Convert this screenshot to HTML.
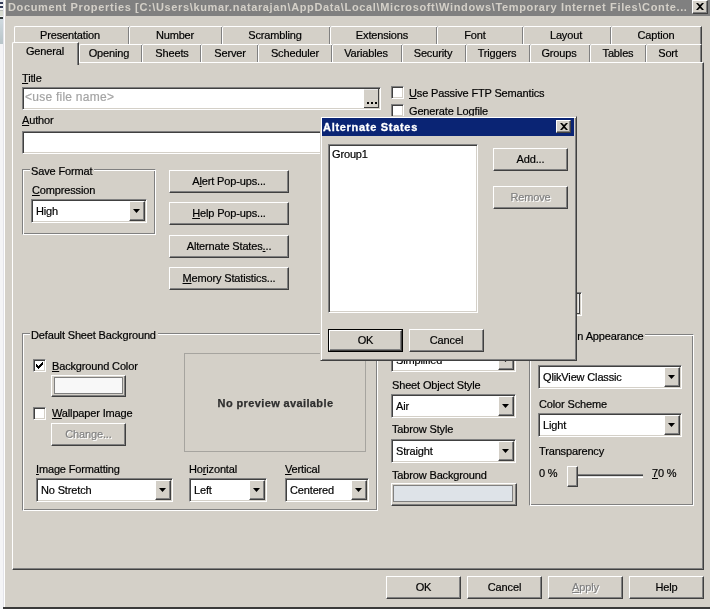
<!DOCTYPE html><html><head><meta charset="utf-8"><style>
html,body{margin:0;padding:0}
body{width:710px;height:609px;overflow:hidden;position:relative;background:#d4d0c8;font-family:"Liberation Sans",sans-serif;font-size:11px;color:#000}
div,svg{position:absolute;box-sizing:content-box}
.t{white-space:nowrap;line-height:14px;height:14px;letter-spacing:-0.15px;will-change:transform;-webkit-text-stroke:0.2px currentColor}
.t u{text-decoration:underline;text-underline-offset:1px}
.rz{background:#d4d0c8;border:1px solid;border-color:#fff #404040 #404040 #fff;box-shadow:inset -1px -1px #808080}
.sk{border:1px solid;border-color:#808080 #fff #fff #808080;box-shadow:inset 1px 1px #404040, inset -1px -1px #d4d0c8}
.gb{border:1px solid;border-color:#808080 #fff #fff #808080;box-shadow:inset 1px 1px #fff, inset -1px -1px #808080}
</style></head><body>
<div style="left:0px;top:0px;width:3px;height:609px;background:#f4f4f6"></div>
<div style="left:0px;top:0px;width:3px;height:2px;background:#e6e8ee"></div>
<div style="left:0px;top:2px;width:3px;height:2px;background:#343c58"></div>
<div style="left:0px;top:6px;width:3px;height:2px;background:#343c58"></div>
<div style="left:0px;top:10px;width:3px;height:1px;background:#b8bcb8"></div>
<div style="left:0px;top:11px;width:3px;height:5px;background:#d8dcd0"></div>
<div style="left:0px;top:17px;width:3px;height:2px;background:#303838"></div>
<div style="left:0px;top:19px;width:3px;height:25px;background:linear-gradient(#d0dae0,#b8c4c8)"></div>
<div style="left:3px;top:0px;width:1px;height:609px;background:#e4e4ea"></div>
<div style="left:4px;top:0px;width:1px;height:609px;background:#fff"></div>
<div style="left:5px;top:0px;width:1px;height:609px;background:#d4d0c8"></div>
<div style="left:6px;top:0px;width:704px;height:16px;background:#808080"></div>
<div class="t" style="left:8px;top:0px;font-size:11px;font-weight:bold;color:#d4d0c8;letter-spacing:0.64px;-webkit-text-stroke:0">Document Properties [C:\Users\kumar.natarajan\AppData\Local\Microsoft\Windows\Temporary Internet Files\Conte...</div>
<div class="rz" style="left:692px;top:0px;width:14px;height:12px;"></div>
<svg style="position:absolute;left:696px;top:3px" width="8" height="7"><path d="M0 0h2l2 2l2-2h2l-3 3.5l3 3.5h-2l-2-2l-2 2h-2l3-3.5z" fill="#000"/></svg>
<div style="left:3px;top:607px;width:707px;height:2px;background:#3a3a3a"></div>
<div class="tab" style="left:14px;top:26px;width:114px;height:18px;border-left:1px solid #fff;border-top:1px solid #fff;box-shadow:inset -1px 0 #808080;border-right:1px solid #404040;background:#d4d0c8;border-top-left-radius:2px"></div>
<div class="t" style="left:10px;top:28px;width:120px;text-align:center;font-size:11px;color:#000;">Presentation</div>
<div class="tab" style="left:129px;top:26px;width:92px;height:18px;border-left:1px solid #fff;border-top:1px solid #fff;box-shadow:inset -1px 0 #808080;border-right:1px solid #404040;background:#d4d0c8;border-top-left-radius:2px"></div>
<div class="t" style="left:115px;top:28px;width:120px;text-align:center;font-size:11px;color:#000;">Number</div>
<div class="tab" style="left:222px;top:26px;width:107px;height:18px;border-left:1px solid #fff;border-top:1px solid #fff;box-shadow:inset -1px 0 #808080;border-right:1px solid #404040;background:#d4d0c8;border-top-left-radius:2px"></div>
<div class="t" style="left:215px;top:28px;width:120px;text-align:center;font-size:11px;color:#000;">Scrambling</div>
<div class="tab" style="left:330px;top:26px;width:106px;height:18px;border-left:1px solid #fff;border-top:1px solid #fff;box-shadow:inset -1px 0 #808080;border-right:1px solid #404040;background:#d4d0c8;border-top-left-radius:2px"></div>
<div class="t" style="left:322px;top:28px;width:120px;text-align:center;font-size:11px;color:#000;">Extensions</div>
<div class="tab" style="left:437px;top:26px;width:85px;height:18px;border-left:1px solid #fff;border-top:1px solid #fff;box-shadow:inset -1px 0 #808080;border-right:1px solid #404040;background:#d4d0c8;border-top-left-radius:2px"></div>
<div class="t" style="left:415px;top:28px;width:120px;text-align:center;font-size:11px;color:#000;">Font</div>
<div class="tab" style="left:523px;top:26px;width:87px;height:18px;border-left:1px solid #fff;border-top:1px solid #fff;box-shadow:inset -1px 0 #808080;border-right:1px solid #404040;background:#d4d0c8;border-top-left-radius:2px"></div>
<div class="t" style="left:506px;top:28px;width:120px;text-align:center;font-size:11px;color:#000;">Layout</div>
<div class="tab" style="left:611px;top:26px;width:89px;height:18px;border-left:1px solid #fff;border-top:1px solid #fff;box-shadow:inset -1px 0 #808080;border-right:1px solid #404040;background:#d4d0c8;border-top-left-radius:2px"></div>
<div class="t" style="left:596px;top:28px;width:120px;text-align:center;font-size:11px;color:#000;">Caption</div>
<div class="tab" style="left:79px;top:44px;width:62px;height:18px;border-left:1px solid #fff;border-top:1px solid #fff;box-shadow:inset -1px 0 #808080;border-right:1px solid #404040;background:#d4d0c8;border-top-left-radius:2px"></div>
<div class="t" style="left:49px;top:46px;width:120px;text-align:center;font-size:11px;color:#000;">Opening</div>
<div class="tab" style="left:142px;top:44px;width:58px;height:18px;border-left:1px solid #fff;border-top:1px solid #fff;box-shadow:inset -1px 0 #808080;border-right:1px solid #404040;background:#d4d0c8;border-top-left-radius:2px"></div>
<div class="t" style="left:112px;top:46px;width:120px;text-align:center;font-size:11px;color:#000;">Sheets</div>
<div class="tab" style="left:201px;top:44px;width:56px;height:18px;border-left:1px solid #fff;border-top:1px solid #fff;box-shadow:inset -1px 0 #808080;border-right:1px solid #404040;background:#d4d0c8;border-top-left-radius:2px"></div>
<div class="t" style="left:170px;top:46px;width:120px;text-align:center;font-size:11px;color:#000;">Server</div>
<div class="tab" style="left:258px;top:44px;width:73px;height:18px;border-left:1px solid #fff;border-top:1px solid #fff;box-shadow:inset -1px 0 #808080;border-right:1px solid #404040;background:#d4d0c8;border-top-left-radius:2px"></div>
<div class="t" style="left:235px;top:46px;width:120px;text-align:center;font-size:11px;color:#000;">Scheduler</div>
<div class="tab" style="left:332px;top:44px;width:69px;height:18px;border-left:1px solid #fff;border-top:1px solid #fff;box-shadow:inset -1px 0 #808080;border-right:1px solid #404040;background:#d4d0c8;border-top-left-radius:2px"></div>
<div class="t" style="left:306px;top:46px;width:120px;text-align:center;font-size:11px;color:#000;">Variables</div>
<div class="tab" style="left:402px;top:44px;width:63px;height:18px;border-left:1px solid #fff;border-top:1px solid #fff;box-shadow:inset -1px 0 #808080;border-right:1px solid #404040;background:#d4d0c8;border-top-left-radius:2px"></div>
<div class="t" style="left:373px;top:46px;width:120px;text-align:center;font-size:11px;color:#000;">Security</div>
<div class="tab" style="left:466px;top:44px;width:63px;height:18px;border-left:1px solid #fff;border-top:1px solid #fff;box-shadow:inset -1px 0 #808080;border-right:1px solid #404040;background:#d4d0c8;border-top-left-radius:2px"></div>
<div class="t" style="left:437px;top:46px;width:120px;text-align:center;font-size:11px;color:#000;">Triggers</div>
<div class="tab" style="left:530px;top:44px;width:59px;height:18px;border-left:1px solid #fff;border-top:1px solid #fff;box-shadow:inset -1px 0 #808080;border-right:1px solid #404040;background:#d4d0c8;border-top-left-radius:2px"></div>
<div class="t" style="left:499px;top:46px;width:120px;text-align:center;font-size:11px;color:#000;">Groups</div>
<div class="tab" style="left:590px;top:44px;width:55px;height:18px;border-left:1px solid #fff;border-top:1px solid #fff;box-shadow:inset -1px 0 #808080;border-right:1px solid #404040;background:#d4d0c8;border-top-left-radius:2px"></div>
<div class="t" style="left:558px;top:46px;width:120px;text-align:center;font-size:11px;color:#000;">Tables</div>
<div class="tab" style="left:646px;top:44px;width:54px;height:18px;border-left:1px solid #fff;border-top:1px solid #fff;box-shadow:inset -1px 0 #808080;border-right:1px solid #404040;background:#d4d0c8;border-top-left-radius:2px"></div>
<div class="t" style="left:608px;top:46px;width:120px;text-align:center;font-size:11px;color:#000;">Sort</div>
<div style="left:12px;top:62px;width:690px;height:506px;border-left:1px solid #fff;border-top:1px solid #fff;border-right:1px solid #404040;border-bottom:1px solid #404040;box-shadow:inset -1px -1px #808080;background:#d4d0c8"></div>
<div style="left:12px;top:42px;width:65px;height:22px;border-left:1px solid #fff;border-top:1px solid #fff;border-right:1px solid #404040;box-shadow:inset -1px 0 #808080;background:#d4d0c8;border-top-left-radius:2px"></div>
<div class="t" style="left:-15px;top:44px;width:120px;text-align:center;font-size:11px;color:#000;">General</div>
<div class="t" style="left:22px;top:71px;font-size:11px;color:#000;"><u>T</u>itle</div>
<div class="sk" style="left:22px;top:87px;width:357px;height:21px;background:#fff"></div>
<div class="t" style="left:25px;top:90px;font-size:12px;color:#a4a4a4;letter-spacing:0.25px">&lt;use file name&gt;</div>
<div style="left:364px;top:89px;width:15px;height:19px;background:#d4d0c8;box-shadow:inset -1px -1px #404040, inset 0 1px #e8e8e8"></div>
<svg style="position:absolute;left:367px;top:102px" width="11" height="3"><rect x="0" y="0" width="2" height="2" fill="#000"/><rect x="4" y="0" width="2" height="2" fill="#000"/><rect x="8" y="0" width="2" height="2" fill="#000"/></svg>
<div class="sk" style="left:391px;top:86px;width:11px;height:11px;background:#fff"></div>
<div class="t" style="left:409px;top:86px;font-size:11px;color:#000;"><u>U</u>se Passive FTP Semantics</div>
<div class="sk" style="left:391px;top:104px;width:11px;height:11px;background:#fff"></div>
<div class="t" style="left:409px;top:104px;font-size:11px;color:#000;">Generate L<u>o</u>gfile</div>
<div class="t" style="left:22px;top:113px;font-size:11px;color:#000;"><u>A</u>uthor</div>
<div class="sk" style="left:22px;top:131px;width:357px;height:21px;background:#fff"></div>
<div class="gb" style="left:22px;top:169px;width:132px;height:64px"></div>
<div class="t" style="left:30px;top:164px;padding:0 2px 0 1px;background:#d4d0c8">Save Format</div>
<div class="t" style="left:32px;top:183px;font-size:11px;color:#000;"><u>C</u>ompression</div>
<div class="sk" style="left:31px;top:199px;width:114px;height:22px;background:#fff"></div>
<div class="rz" style="left:129px;top:201px;width:14px;height:18px;"></div>
<svg style="position:absolute;left:133px;top:209px" width="8" height="5"><path d="M0 0h7l-3.5 4z" fill="#000"/></svg>
<div class="t" style="left:36px;top:204px;font-size:11px;color:#000;">High</div>
<div class="rz" style="left:169px;top:170px;width:118px;height:21px;"></div>
<div class="t" style="left:169px;top:174px;width:120px;text-align:center;font-size:11px;color:#000;">A<u>l</u>ert Pop-ups...</div>
<div class="rz" style="left:169px;top:202px;width:118px;height:21px;"></div>
<div class="t" style="left:169px;top:206px;width:120px;text-align:center;font-size:11px;color:#000;"><u>H</u>elp Pop-ups...</div>
<div class="rz" style="left:169px;top:235px;width:118px;height:21px;"></div>
<div class="t" style="left:169px;top:239px;width:120px;text-align:center;font-size:11px;color:#000;">Alternate States<u>.</u>..</div>
<div class="rz" style="left:169px;top:267px;width:118px;height:21px;"></div>
<div class="t" style="left:169px;top:271px;width:120px;text-align:center;font-size:11px;color:#000;"><u>M</u>emory Statistics...</div>
<div class="sk" style="left:500px;top:292px;width:80px;height:22px;background:#fff"></div>
<div style="left:562px;top:294px;width:18px;height:20px;background:#d4d0c8;box-shadow:inset -1px -1px #404040, inset -2px 0 #eaeaea"></div>
<div class="gb" style="left:22px;top:333px;width:354px;height:176px"></div>
<div class="t" style="left:30px;top:328px;padding:0 2px 0 1px;background:#d4d0c8">Default Sheet Background</div>
<div class="sk" style="left:33px;top:359px;width:11px;height:11px;background:#fff"></div>
<svg style="position:absolute;left:36px;top:362px" width="7" height="7" shape-rendering="crispEdges"><path d="M6 0h1v3h-1zM5 1h1v3h-1zM4 2h1v3h-1zM3 3h1v3h-1zM2 4h1v3h-1zM1 3h1v3h-1zM0 2h1v3h-1z" fill="#000"/></svg>
<div class="t" style="left:52px;top:359px;font-size:11px;color:#000;"><u>B</u>ackground Color</div>
<div class="rz" style="left:51px;top:375px;width:73px;height:20px;"></div>
<div style="left:54px;top:377px;width:67px;height:15px;border:1px solid #808080;background:#f8f8f8"></div>
<div class="sk" style="left:33px;top:407px;width:11px;height:11px;background:#fff"></div>
<div class="t" style="left:52px;top:406px;font-size:11px;color:#000;"><u>W</u>allpaper Image</div>
<div class="rz" style="left:51px;top:423px;width:73px;height:21px;"></div>
<div class="t" style="left:52px;top:428px;width:75px;text-align:center;font-size:11px;color:#fff;">Chan<u>g</u>e...</div>
<div class="t" style="left:51px;top:427px;width:75px;text-align:center;font-size:11px;color:#808080;">Chan<u>g</u>e...</div>
<div style="left:184px;top:353px;width:180px;height:97px;border:1px solid #a6a49f"></div>
<div class="t" style="left:184px;top:396px;width:183px;text-align:center;font-size:11px;font-weight:bold;color:#2e2e2e;letter-spacing:0.38px;-webkit-text-stroke:0.25px #2e2e2e">No preview available</div>
<div class="t" style="left:36px;top:462px;font-size:11px;color:#000;"><u>I</u>mage Formatting</div>
<div class="sk" style="left:36px;top:478px;width:135px;height:22px;background:#fff"></div>
<div class="rz" style="left:155px;top:480px;width:14px;height:18px;"></div>
<svg style="position:absolute;left:159px;top:488px" width="8" height="5"><path d="M0 0h7l-3.5 4z" fill="#000"/></svg>
<div class="t" style="left:41px;top:483px;font-size:11px;color:#000;">No Stretch</div>
<div class="t" style="left:189px;top:462px;font-size:11px;color:#000;">Ho<u>r</u>izontal</div>
<div class="sk" style="left:189px;top:478px;width:76px;height:22px;background:#fff"></div>
<div class="rz" style="left:249px;top:480px;width:14px;height:18px;"></div>
<svg style="position:absolute;left:253px;top:488px" width="8" height="5"><path d="M0 0h7l-3.5 4z" fill="#000"/></svg>
<div class="t" style="left:194px;top:483px;font-size:11px;color:#000;">Left</div>
<div class="t" style="left:285px;top:462px;font-size:11px;color:#000;"><u>V</u>ertical</div>
<div class="sk" style="left:285px;top:478px;width:82px;height:22px;background:#fff"></div>
<div class="rz" style="left:351px;top:480px;width:14px;height:18px;"></div>
<svg style="position:absolute;left:355px;top:488px" width="8" height="5"><path d="M0 0h7l-3.5 4z" fill="#000"/></svg>
<div class="t" style="left:290px;top:483px;font-size:11px;color:#000;">Centered</div>
<div class="sk" style="left:391px;top:348px;width:123px;height:22px;background:#fff"></div>
<div class="rz" style="left:498px;top:350px;width:14px;height:18px;"></div>
<svg style="position:absolute;left:502px;top:358px" width="8" height="5"><path d="M0 0h7l-3.5 4z" fill="#000"/></svg>
<div class="t" style="left:396px;top:353px;font-size:11px;color:#000;">Simplified</div>
<div class="t" style="left:392px;top:378px;font-size:11px;color:#000;">Sheet Object Style</div>
<div class="sk" style="left:391px;top:394px;width:123px;height:22px;background:#fff"></div>
<div class="rz" style="left:498px;top:396px;width:14px;height:18px;"></div>
<svg style="position:absolute;left:502px;top:404px" width="8" height="5"><path d="M0 0h7l-3.5 4z" fill="#000"/></svg>
<div class="t" style="left:396px;top:399px;font-size:11px;color:#000;">Air</div>
<div class="t" style="left:392px;top:422px;font-size:11px;color:#000;">Tabrow Style</div>
<div class="sk" style="left:391px;top:439px;width:123px;height:22px;background:#fff"></div>
<div class="rz" style="left:498px;top:441px;width:14px;height:18px;"></div>
<svg style="position:absolute;left:502px;top:449px" width="8" height="5"><path d="M0 0h7l-3.5 4z" fill="#000"/></svg>
<div class="t" style="left:396px;top:444px;font-size:11px;color:#000;">Straight</div>
<div class="t" style="left:392px;top:468px;font-size:11px;color:#000;">Tabrow Background</div>
<div class="rz" style="left:391px;top:483px;width:124px;height:21px;"></div>
<div style="left:393px;top:485px;width:118px;height:15px;border:1px solid #808080;background:#dee3e8"></div>
<div class="gb" style="left:529px;top:334px;width:163px;height:170px"></div>
<div class="t" style="right:65px;top:329px;padding:0 2px 0 2px;background:#d4d0c8">Design Appearance</div>
<div class="sk" style="left:538px;top:365px;width:142px;height:22px;background:#fff"></div>
<div class="rz" style="left:664px;top:367px;width:14px;height:18px;"></div>
<svg style="position:absolute;left:668px;top:375px" width="8" height="5"><path d="M0 0h7l-3.5 4z" fill="#000"/></svg>
<div class="t" style="left:543px;top:370px;font-size:11px;color:#000;">QlikView Classic</div>
<div class="t" style="left:539px;top:397px;font-size:11px;color:#000;">Color Scheme</div>
<div class="sk" style="left:538px;top:413px;width:142px;height:22px;background:#fff"></div>
<div class="rz" style="left:664px;top:415px;width:14px;height:18px;"></div>
<svg style="position:absolute;left:668px;top:423px" width="8" height="5"><path d="M0 0h7l-3.5 4z" fill="#000"/></svg>
<div class="t" style="left:543px;top:418px;font-size:11px;color:#000;">Light</div>
<div class="t" style="left:539px;top:444px;font-size:11px;color:#000;">Transparency</div>
<div class="t" style="left:539px;top:466px;font-size:11px;color:#000;">0 %</div>
<div style="left:577px;top:474px;width:66px;height:4px;background:linear-gradient(#808080 0 1px,#404040 1px 2px,#e0e0e0 2px 3px,#fff 3px 4px)"></div>
<div class="rz" style="left:567px;top:466px;width:9px;height:19px;"></div>
<div class="t" style="left:652px;top:466px;font-size:11px;color:#000;"><u>7</u>0 %</div>
<div class="rz" style="left:386px;top:576px;width:73px;height:21px;"></div>
<div class="t" style="left:386px;top:580px;width:75px;text-align:center;font-size:11px;color:#000;">OK</div>
<div class="rz" style="left:467px;top:576px;width:73px;height:21px;"></div>
<div class="t" style="left:467px;top:580px;width:75px;text-align:center;font-size:11px;color:#000;">Cancel</div>
<div class="rz" style="left:548px;top:576px;width:73px;height:21px;"></div>
<div class="t" style="left:549px;top:581px;width:75px;text-align:center;font-size:11px;color:#fff;"><u>A</u>pply</div>
<div class="t" style="left:548px;top:580px;width:75px;text-align:center;font-size:11px;color:#808080;"><u>A</u>pply</div>
<div class="rz" style="left:629px;top:576px;width:73px;height:21px;"></div>
<div class="t" style="left:629px;top:580px;width:75px;text-align:center;font-size:11px;color:#000;">Help</div>
<div style="left:320px;top:116px;width:255px;height:243px;border:1px solid;border-color:#d4d0c8 #404040 #404040 #d4d0c8;box-shadow:inset 1px 1px #fff, inset -1px -1px #808080;background:#d4d0c8"></div>
<div style="left:322px;top:118px;width:252px;height:18px;background:#0a2474"></div>
<div class="t" style="left:323px;top:120px;font-size:11px;font-weight:bold;color:#fff;letter-spacing:0.7px;-webkit-text-stroke:0.3px #fff">Alternate States</div>
<div class="rz" style="left:556px;top:120px;width:13px;height:11px;"></div>
<svg style="position:absolute;left:560px;top:123px" width="8" height="7"><path d="M0 0h2l2 2l2-2h2l-3 3.5l3 3.5h-2l-2-2l-2 2h-2l3-3.5z" fill="#000"/></svg>
<div class="sk" style="left:328px;top:144px;width:148px;height:167px;background:#fff"></div>
<div class="t" style="left:332px;top:147px;font-size:11px;color:#000;">Group1</div>
<div class="rz" style="left:493px;top:148px;width:73px;height:21px;"></div>
<div class="t" style="left:493px;top:152px;width:75px;text-align:center;font-size:11px;color:#000;">Add...</div>
<div class="rz" style="left:493px;top:186px;width:73px;height:21px;"></div>
<div class="t" style="left:494px;top:191px;width:75px;text-align:center;font-size:11px;color:#fff;">Remove</div>
<div class="t" style="left:493px;top:190px;width:75px;text-align:center;font-size:11px;color:#808080;">Remove</div>
<div style="left:328px;top:329px;width:73px;height:21px;border:1px solid #000"></div>
<div class="rz" style="left:329px;top:330px;width:71px;height:19px;"></div>
<div class="t" style="left:328px;top:333px;width:75px;text-align:center;font-size:11px;color:#000;">OK</div>
<div class="rz" style="left:409px;top:329px;width:73px;height:21px;"></div>
<div class="t" style="left:409px;top:333px;width:75px;text-align:center;font-size:11px;color:#000;">Cancel</div>
</body></html>
